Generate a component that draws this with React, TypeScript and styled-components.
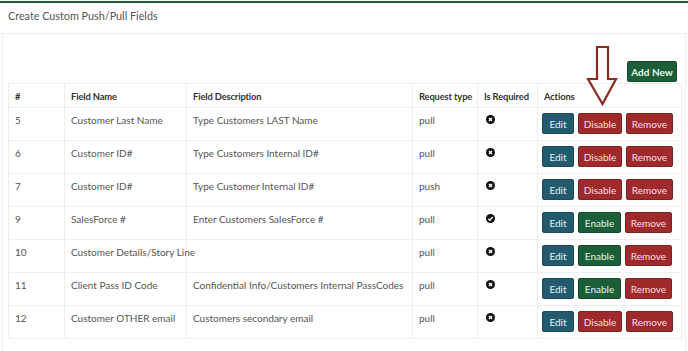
import { FunctionComponent } from "react"
import styled, { createGlobalStyle } from 'styled-components'

const GlobalStyle = createGlobalStyle`
    html, body{
        margin: 0;
        padding: 0;
        background: #fff;
    }
    body{
        font-family: Lato, "Open Sans", sans-serif;
        color: #555;
    }
`

const Page = styled.div`
    width: 688px;
    height: 351px;
    overflow: hidden;
    border-top: 2px solid #1e5b3a;
    margin-top: 1px;
    box-sizing: border-box;
`

const TitleBar = styled.div`
    height: 31px;
    padding: 0 8px;
    display: flex;
    align-items: center;
    border-bottom: 1px solid #ececec;
    box-sizing: border-box;

    h2{
        margin: 0 0 6px 0;
        font-size: 10.8px;
        font-weight: 400;
        color: #555;
    }
`

const Panel = styled.div`
    position: relative;
    margin: 0 2px;
    padding: 27px 5px 14px 5px;
    border-left: 1px solid #eee;
    border-right: 1px solid #eee;
    border-bottom: 1px solid #eee;
`

const Toolbar = styled.div`
    display: flex;
    justify-content: flex-end;
    padding-right: 3px;
    margin-bottom: 1px;
`

type Tone = 'blue' | 'red' | 'green'

const tones: Record<Tone, { bg: string, border: string, text: string }> = {
    blue: { bg: '#235a6e', border: '#1b4a5b', text: '#e4f3f8' },
    red: { bg: '#9e2a2b', border: '#7e2222', text: '#ffdfe4' },
    green: { bg: '#1b5e38', border: '#154a2c', text: '#e2f7e8' },
}

const Button = styled.button<{ $tone: Tone, $w: number }>`
    width: ${p => p.$w}px;
    height: 21px;
    padding: 0;
    border-radius: 2px;
    border: 1px solid ${p => tones[p.$tone].border};
    background: ${p => tones[p.$tone].bg};
    color: ${p => tones[p.$tone].text};
    font-family: Lato, "Open Sans", sans-serif;
    font-size: 10px;
    cursor: pointer;
`

const AddButton = styled(Button)`
    font-weight: 700;
`

const Table = styled.table`
    width: 673px;
    border-collapse: collapse;
    table-layout: fixed;
    font-size: 10px;

    th, td{
        border: 1px solid #eeeeee;
        text-align: left;
        vertical-align: top;
        padding: 6px 5px 0 6px;
        line-height: 13px;
        white-space: nowrap;
        box-sizing: border-box;
    }

    th{
        height: 24px;
        color: #333;
        font-weight: 700;
        font-size: 9.4px;
        letter-spacing: -0.15px;
    }

    td{
        height: 33px;
        color: #555;
    }
`

const Col = styled.col<{ $w: number }>`
    width: ${p => p.$w}px;
`

const ActionCell = styled.td`
    && { padding: 5px 4px 0 4px; }
`

const Actions = styled.div`
    display: flex;
    gap: 4px;
`

const IconCell = styled.td`
    && { padding-left: 8px; padding-top: 7px; }

    svg{
        display: block;
    }
`

const Arrow = styled.svg`
    position: absolute;
    left: 582px;
    top: 11px;
    pointer-events: none;
`

const StatusIcon = ({ ok }: { ok: boolean }) => (
    <svg width="9" height="9" viewBox="0 0 16 16">
        <circle cx="8" cy="8" r="8" fill="#111" />
        {ok ? (
            <path d="M4.2 8.3 L7 11 L11.8 5.4" stroke="#fff" strokeWidth="2.4" fill="none" />
        ) : (
            <path d="M5.3 5.3 L10.7 10.7 M10.7 5.3 L5.3 10.7" stroke="#fff" strokeWidth="2.4" />
        )}
    </svg>
)

type Row = {
    id: number
    name: string
    desc: string
    type: string
    required: boolean
    enabled: boolean
}

const rows: Row[] = [
    { id: 5, name: 'Customer Last Name', desc: 'Type Customers LAST Name', type: 'pull', required: false, enabled: true },
    { id: 6, name: 'Customer ID#', desc: 'Type Customers Internal ID#', type: 'pull', required: false, enabled: true },
    { id: 7, name: 'Customer ID#', desc: 'Type Customer Internal ID#', type: 'push', required: false, enabled: true },
    { id: 9, name: 'SalesForce #', desc: 'Enter Customers SalesForce #', type: 'pull', required: true, enabled: false },
    { id: 10, name: 'Customer Details/Story Line', desc: '', type: 'pull', required: false, enabled: false },
    { id: 11, name: 'Client Pass ID Code', desc: 'Confidential Info/Customers Internal PassCodes', type: 'pull', required: false, enabled: false },
    { id: 12, name: 'Customer OTHER email', desc: 'Customers secondary email', type: 'pull', required: false, enabled: true },
]

const App: FunctionComponent = () => {
    return (
        <Page>
            <GlobalStyle />
            <TitleBar>
                <h2>Create Custom Push/Pull Fields</h2>
            </TitleBar>
            <Panel>
                <Toolbar>
                    <AddButton $tone="green" $w={50}>Add New</AddButton>
                </Toolbar>
                <Table>
                    <colgroup>
                        <Col $w={56} />
                        <Col $w={122} />
                        <Col $w={226} />
                        <Col $w={65} />
                        <Col $w={60} />
                        <Col $w={144} />
                    </colgroup>
                    <thead>
                        <tr>
                            <th>#</th>
                            <th>Field Name</th>
                            <th>Field Description</th>
                            <th>Request type</th>
                            <th>Is Required</th>
                            <th>Actions</th>
                        </tr>
                    </thead>
                    <tbody>
                        {rows.map(r => (
                            <tr key={r.id}>
                                <td>{r.id}</td>
                                <td>{r.name}</td>
                                <td>{r.desc}</td>
                                <td>{r.type}</td>
                                <IconCell><StatusIcon ok={r.required} /></IconCell>
                                <ActionCell>
                                    <Actions>
                                        <Button $tone="blue" $w={32}>Edit</Button>
                                        {r.enabled
                                            ? <Button $tone="red" $w={44}>Disable</Button>
                                            : <Button $tone="green" $w={43}>Enable</Button>}
                                        <Button $tone="red" $w={47}>Remove</Button>
                                    </Actions>
                                </ActionCell>
                            </tr>
                        ))}
                    </tbody>
                </Table>
                {/* annotation arrow pointing at the Disable column */}
                <Arrow width="34" height="62" viewBox="0 0 34 62">
                    <path d="M12 2 H23 V34 H31 L17.5 59 L3 34 H12 Z"
                        fill="none" stroke="#8a2b22" strokeWidth="2.2" strokeLinejoin="miter" />
                </Arrow>
            </Panel>
        </Page>
    )
}

export default App
